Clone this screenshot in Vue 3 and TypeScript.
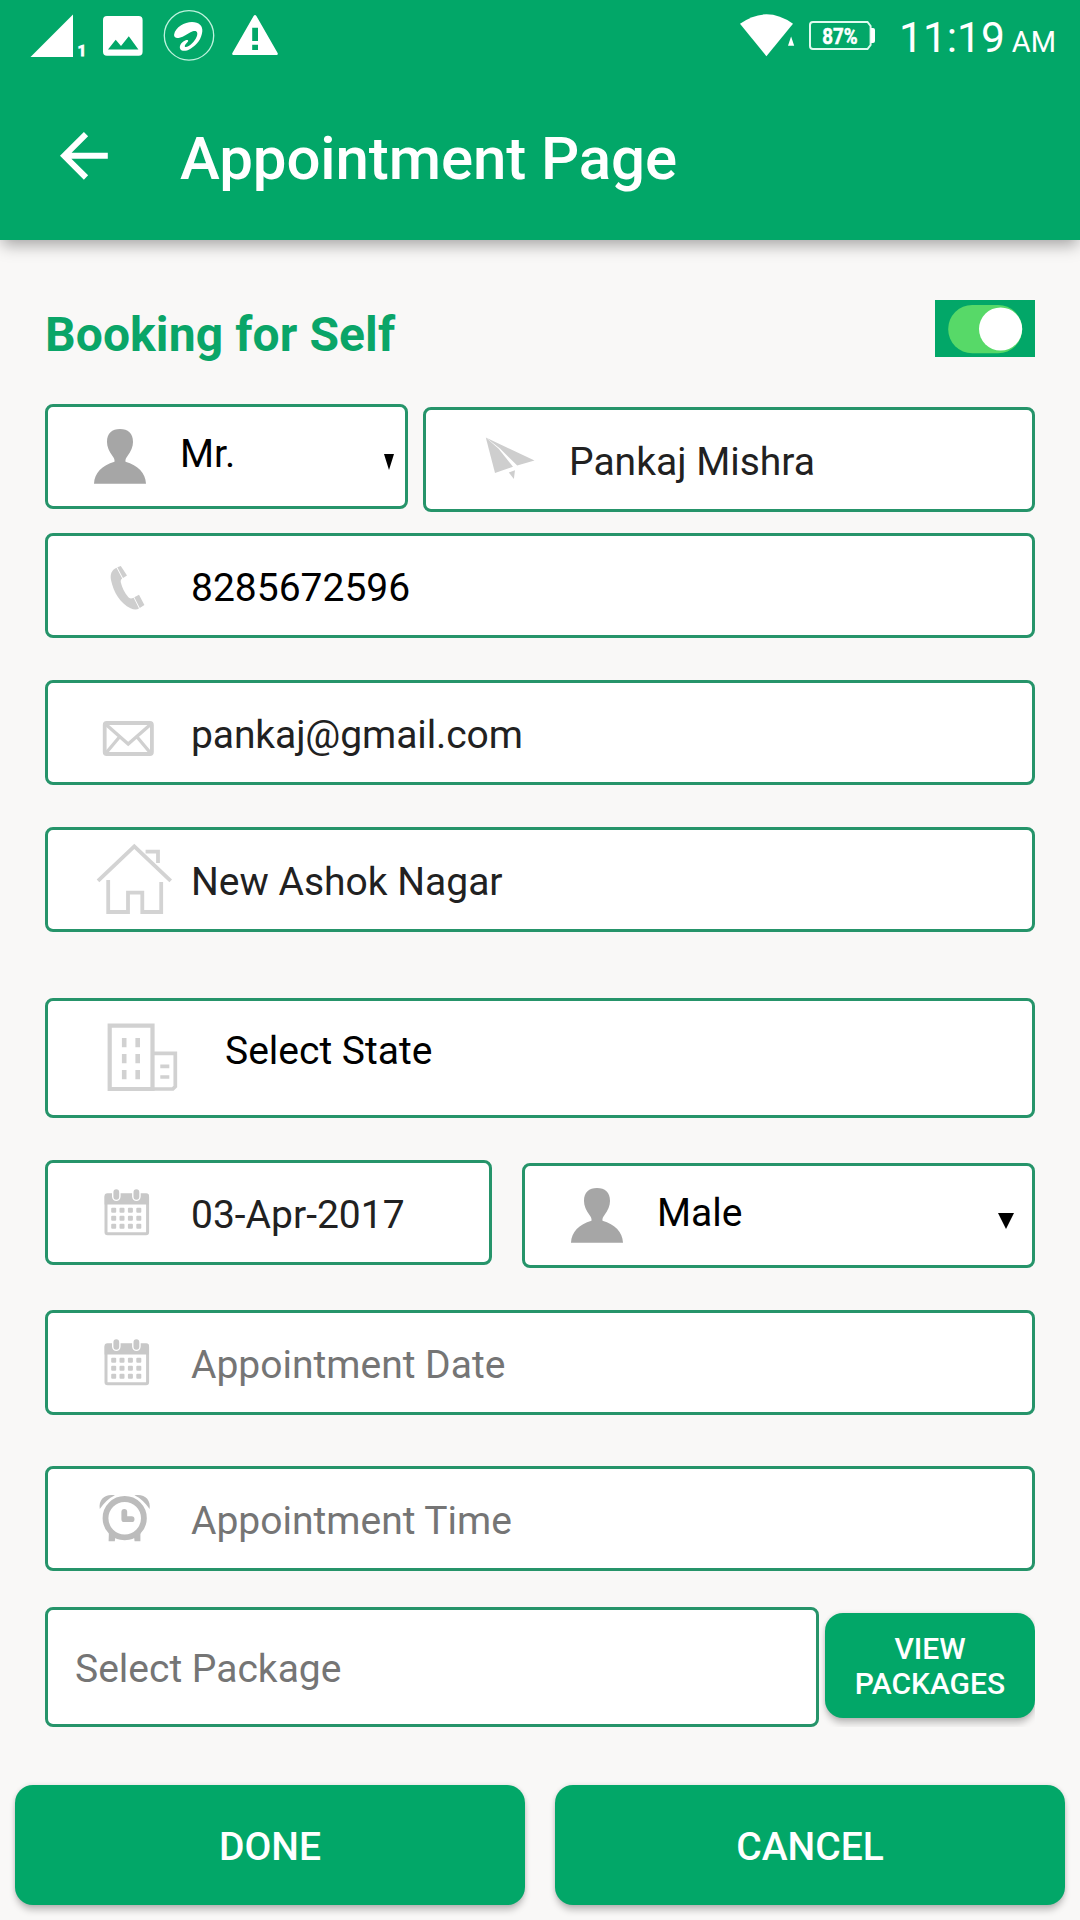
<script setup lang="ts">
import { ref } from 'vue'

type IconName = 'person' | 'plane' | 'phone' | 'mail' | 'home' | 'building' | 'calendar' | 'clock' | 'none'

interface Field {
  id: string
  icon: IconName
  text: string
  kind: 'select' | 'input' | 'hint' | 'state' | 'package' | 'digits'
  arrow?: 'narrow' | 'wide'
}

const rows = ref<{ id: string; fields: Field[] }[]>([
  {
    id: 'name',
    fields: [
      { id: 'salutation', icon: 'person', text: 'Mr.', kind: 'select', arrow: 'narrow' },
      { id: 'fullname', icon: 'plane', text: 'Pankaj Mishra', kind: 'input' },
    ],
  },
  { id: 'phone', fields: [{ id: 'mobile', icon: 'phone', text: '8285672596', kind: 'digits' }] },
  { id: 'email', fields: [{ id: 'mail', icon: 'mail', text: 'pankaj@gmail.com', kind: 'input' }] },
  { id: 'address', fields: [{ id: 'street', icon: 'home', text: 'New Ashok Nagar', kind: 'input' }] },
  { id: 'region', fields: [{ id: 'state', icon: 'building', text: 'Select State', kind: 'state' }] },
  {
    id: 'personal',
    fields: [
      { id: 'birth', icon: 'calendar', text: '03-Apr-2017', kind: 'input' },
      { id: 'gender', icon: 'person', text: 'Male', kind: 'select', arrow: 'wide' },
    ],
  },
  { id: 'date', fields: [{ id: 'appdate', icon: 'calendar', text: 'Appointment Date', kind: 'hint' }] },
  { id: 'time', fields: [{ id: 'apptime', icon: 'clock', text: 'Appointment Time', kind: 'hint' }] },
  { id: 'bundle', fields: [{ id: 'package', icon: 'none', text: 'Select Package', kind: 'package' }] },
])

const dotsX = [68.7, 77, 85.4, 93.8]
const dotsY = [50.3, 58.3, 66.3]
const windowsY = [40, 56, 72]
</script>

<template>
  <div class="screen">
    <header class="header">
      <div class="status">
        <svg class="s-signal" width="60" height="72" viewBox="30 0 60 72">
          <path d="M73 14.5V57H30.5Z" fill="#fff" />
          <text x="77.6" y="56" font-size="15.5" font-weight="700" fill="#fff" stroke="#fff" stroke-width="0.8">1</text>
        </svg>
        <svg class="s-image" width="40" height="72" viewBox="103 0 40 72">
          <path fill="#fff" fill-rule="evenodd" d="M107 16H138.6Q142.6 16 142.6 20V51.7Q142.6 55.7 138.6 55.7H107Q103 55.7 103 51.7V20Q103 16 107 16ZM108 49.5H138.4L128.8 36.2L121 46L115.7 39.7Z" />
        </svg>
        <svg class="s-swirl" width="52" height="72" viewBox="163 0 52 72">
          <circle cx="189" cy="35.4" r="24.7" fill="none" stroke="#bff3de" stroke-width="1.3" />
          <path fill="#fff" d="M174.1 34.6C175.5 27 184.5 22 192 22C199 22 203 26 202.3 31.5C201.5 38.5 197.5 44.5 190.5 48.7C186 51.4 182 51.6 180.4 49.2C178.7 46.5 181 42.3 185.2 40.5C187.4 39.6 189 40.4 187.8 41.8C186.4 43.2 184.5 45.2 184.8 46.4C185.4 47.9 189.2 46.1 192.4 42.9C195.8 39.5 197.8 35.2 197.2 32.7C196.6 30.4 193.8 30.7 190.5 32.2C187 33.8 184 36.6 179.5 37.7C176.3 38.5 173.7 37.5 174.1 34.6Z" />
        </svg>
        <svg class="s-warn" width="46" height="72" viewBox="232 0 46 72">
          <path fill="#fff" fill-rule="evenodd" d="M253.6 16Q255 14 256.4 16L277.6 53Q278.4 55 276.5 55H233.5Q231.6 55 232.4 53ZM252.2 27.8V41H258V27.8ZM252.2 44.8V50H258V44.8Z" />
        </svg>
        <svg class="s-wifi" width="56" height="72" viewBox="739 0 56 72">
          <path d="M740 23.8Q766.5 4.8 793 23.8L766.4 56.2Z" fill="#fff" />
          <path d="M791.1 36.6L794.2 45.7H788Z" fill="#fff" />
        </svg>
        <svg class="s-batt" width="68" height="72" viewBox="808 0 68 72">
          <path d="M813 22H867.5L870.6 26V45L867.5 49H813Q810 49 810 46V25Q810 22 813 22Z" fill="none" stroke="#dffbef" stroke-width="2" />
          <path d="M871 28H873Q875 28 875 30V41Q875 43 873 43H871Z" fill="#fff" />
          <text x="822.2" y="44.3" font-size="22.3" font-weight="700" fill="#fff" stroke="#fff" stroke-width="0.5" textLength="35.4" lengthAdjust="spacingAndGlyphs">87%</text>
        </svg>
        <div class="clock"><span>11:19</span><span class="ampm">AM</span></div>
      </div>
      <div class="toolbar">
        <svg class="back" width="50" height="50" viewBox="60 131 50 50">
          <path d="M107.8 155.8H64M86 134.1L64.2 155.8L86 177.5" fill="none" stroke="#fff" stroke-width="6" />
        </svg>
        <h1>Appointment Page</h1>
      </div>
    </header>

    <main class="form">
      <div class="self">
        <h2>Booking for Self</h2>
        <svg width="100" height="57" viewBox="0 0 100 57">
          <rect width="100" height="57" fill="#02a768" />
          <rect x="13.2" y="5" width="74" height="48.3" rx="24" fill="#57d968" />
          <circle cx="65.6" cy="29" r="21.6" fill="#fff" />
        </svg>
      </div>

      <div v-for="row in rows" :key="row.id" class="row" :class="'row-' + row.id">
        <div v-for="f in row.fields" :key="f.id" class="field" :class="['f-' + f.id, 'k-' + f.kind]">
          <svg v-if="f.icon !== 'none'" class="icon" width="130" height="99" viewBox="3 3 130 99">
            <path v-if="f.icon === 'person'" fill="#a6a6a6" d="M49 79.8C49.5 69 57 61.5 69.5 57.8C69.8 55.5 69 54 67.5 52C64 47 62 43 62 38C62 29 67 25 75 25S88 29 88 38C88 43 86 47 82.5 52C81 54 80.2 55.5 80.5 57.8C93 61.5 100.5 69 101 79.8Z" />
            <g v-else-if="f.icon === 'plane'" fill="#cecece">
              <path d="M62.8 30.5L75.6 41.8L90 59.8L72 65.9Z" />
              <path d="M62.8 30.5L111.5 53.6L94.2 58.5L77 41.5Z" />
              <path d="M85.8 65.6L92 63.2L90.9 72Z" />
            </g>
            <g v-else-if="f.icon === 'phone'" fill="#cecece">
              <path d="M71.5 34.8C66.5 37 65 41.5 66 47C68.5 59.5 75.5 70.5 85.5 75.3C89 76.9 92 76.8 94 75.5L88.6 64.7C86 66 84.5 65.6 83 63.8C79.5 59.8 77 54.5 75.9 49.8C75.4 47.6 75.8 46.4 77.2 45.4Z" />
              <path d="M72.3 34.3L75.8 33L82 42.6L78 45ZM89.3 64.2L94 61.8L99.4 72L94.8 75Z" />
            </g>
            <g v-else-if="f.icon === 'mail'" fill="none" stroke="#d0d0d0" stroke-width="3.8">
              <rect x="59.7" y="43" width="47.2" height="31" rx="2" />
              <path d="M61 44.5L83.2 64L105.5 44.5M61 73L74 57.5M105.5 73L92.5 57.5" stroke-width="3.3" />
            </g>
            <g v-else-if="f.icon === 'home'" fill="none" stroke="#d3d3d3" stroke-width="3.8">
              <path d="M53 53.8L89.3 19.4L125.7 53.8M100.6 24.6H113V36" />
              <path d="M63.2 53V85H83V65.6H97.3V85H116.2V55" />
            </g>
            <g v-else-if="f.icon === 'building'" fill="none" stroke="#d1d1d1" stroke-width="4.2">
              <path d="M64.7 27.7H107.5V91H64.7Z" />
              <path d="M107.5 55.3H130.3V88.5L127.8 91H107.5" stroke-width="3.7" />
              <path v-for="y in windowsY" :key="y" :d="`M79.2 ${y}v9.2M92.7 ${y}v9.2`" stroke-width="4.6" />
              <path d="M115.3 68.3h9M115.3 79h9" stroke-width="3.7" />
            </g>
            <g v-else-if="f.icon === 'calendar'">
              <rect x="61" y="35.5" width="41.6" height="38.2" rx="1.5" fill="none" stroke="#cbcbcb" stroke-width="3" />
              <path d="M59.6 36Q59.6 33.3 62.3 33.3H101.3Q104 33.3 104 36V44.6H59.6Z" fill="#c8c8c8" />
              <g stroke-linecap="round">
                <path d="M71.3 32V36.6M91.4 32V36.6" stroke="#fff" stroke-width="8.6" />
                <path d="M71.3 32.2V36.8M91.4 32.2V36.8" stroke="#c8c8c8" stroke-width="5.8" />
              </g>
              <template v-for="y in dotsY" :key="y">
                <rect v-for="x in dotsX" :key="x" :x="x - 2.5" :y="y - 2.5" width="5" height="5" rx="1" fill="#cccccc" />
              </template>
            </g>
            <g v-else fill="none" stroke="#bcbcbc">
              <path d="M64 64L70.5 70L69.8 75.2H63.6ZM95.4 64L88.9 70L89.6 75.2H95.4Z" fill="#bcbcbc" stroke="none" />
              <circle cx="79.7" cy="52.2" r="19.2" stroke-width="5.8" />
              <path d="M79.3 45.8V53.2H86.6" stroke-width="5.8" stroke-linecap="round" stroke-linejoin="round" />
              <path d="M54.8 43C53.3 33.5 60 27.5 70 29.3C63.5 32.4 59 36.8 54.8 43ZM104.6 43C106.1 33.5 99.4 27.5 89.4 29.3C95.9 32.4 100.4 36.8 104.6 43Z" fill="#bcbcbc" stroke="none" />
            </g>
          </svg>
          <span class="value">{{ f.text }}</span>
          <svg v-if="f.arrow" class="arrow" :class="f.arrow" viewBox="0 0 16 16" preserveAspectRatio="none">
            <path d="M0 0H16L8 16Z" fill="#000" />
          </svg>
        </div>
        <div v-if="row.id === 'bundle'" class="clip">
          <button class="btn view" type="button"><span>VIEW</span><span>PACKAGES</span></button>
        </div>
      </div>
    </main>

    <footer class="actions">
      <button class="btn big" type="button">DONE</button>
      <button class="btn big" type="button">CANCEL</button>
    </footer>
  </div>
</template>

<style>
body {
  background: #f9f8f7;
}
</style>

<style scoped>
.screen {
  width: 1080px;
  height: 1920px;
  overflow: hidden;
  background: #f9f8f7;
  font-family: Roboto, 'Noto Sans', sans-serif;
  display: flex;
  flex-direction: column;
}
svg {
  display: block;
  flex: none;
}
.header {
  height: 240px;
  flex: none;
  background: #02a768;
  color: #fff;
  box-shadow: 0 7px 15px -2px rgba(0, 0, 0, 0.34);
}
.status {
  height: 72px;
  display: flex;
  padding-left: 30px;
}
.s-image {
  margin-left: 13px;
}
.s-swirl {
  margin-left: 20px;
}
.s-warn {
  margin-left: 17px;
}
.s-wifi {
  margin-left: 461px;
}
.s-batt {
  margin-left: 13px;
}
.clock {
  margin-left: 23px;
  display: flex;
  align-items: baseline;
  font-size: 42.5px;
  line-height: 75px;
  white-space: nowrap;
}
.ampm {
  font-size: 29px;
  margin-left: 7px;
}
.toolbar {
  height: 168px;
  display: flex;
  align-items: flex-start;
  padding-left: 60px;
}
.back {
  margin-top: 59px;
}
h1,
h2 {
  margin: 0;
  white-space: nowrap;
}
h1 {
  margin: 52px 0 0 70px;
  font-size: 60px;
  line-height: 70px;
  font-weight: 500;
  letter-spacing: -0.1px;
}
.form {
  padding: 60px 45px 0;
}
.self {
  display: flex;
  justify-content: space-between;
  height: 104px;
}
h2 {
  margin-top: 6px;
  font-size: 48px;
  line-height: 57px;
  font-weight: 700;
  letter-spacing: 0.1px;
  color: #0aa568;
}
.row {
  display: flex;
  align-items: flex-start;
  margin-bottom: 42px;
}
.row-name {
  margin-bottom: 21px;
}
.row-address {
  margin-bottom: 66px;
}
.row-date {
  margin-bottom: 51px;
}
.row-time {
  margin-bottom: 36px;
}
.row-bundle {
  margin-bottom: 0;
}
.field {
  box-sizing: border-box;
  flex: 1;
  height: 105px;
  display: flex;
  align-items: flex-start;
  border: 3px solid #26946a;
  border-radius: 8px;
  background: #fff;
  font-size: 39px;
  line-height: 46px;
  color: #212121;
}
.f-salutation {
  flex: 0 0 363px;
}
.f-fullname {
  margin: 3px 0 0 15px;
}
.f-birth {
  flex: 0 0 447px;
}
.f-gender {
  margin: 3px 0 0 30px;
}
.k-state,
.k-package {
  height: 120px;
}
.value {
  margin: 29px 0 0 13px;
  white-space: nowrap;
}
.f-mail .value {
  letter-spacing: -0.1px;
}
.k-digits,
.k-select,
.k-state {
  color: #000;
}
.k-select .value {
  margin: 24px 0 0 2px;
}
.k-state .value {
  margin: 27px 0 0 47px;
}
.k-hint,
.k-package {
  color: #757575;
}
.k-package .value {
  margin: 36px 0 0 27px;
}
.f-package {
  flex: 0 0 774px;
}
.arrow {
  margin-left: auto;
  margin-top: 47px;
  height: 16px;
}
.narrow {
  width: 10px;
  margin-right: 11px;
}
.wide {
  width: 16px;
  margin-right: 18px;
}
.btn {
  border: 0;
  padding: 0;
  border-radius: 18px;
  background: #02a768;
  color: #fff;
  font-family: inherit;
  font-weight: 500;
  box-shadow: 0 6px 7px -1px rgba(0, 0, 0, 0.24), 0 0 4px rgba(0, 0, 0, 0.12);
}
.clip {
  width: 216px;
  height: 120px;
  overflow: hidden;
}
.view {
  display: flex;
  flex-direction: column;
  align-items: center;
  justify-content: flex-start;
  width: 210px;
  height: 105px;
  margin: 6px 0 0 6px;
  padding-top: 18px;
  font-size: 30px;
  line-height: 35px;
}
.actions {
  display: flex;
  gap: 30px;
  padding: 58px 15px 0;
}
.big {
  flex: 1;
  height: 120px;
  padding-top: 3px;
  font-size: 39px;
}
</style>
